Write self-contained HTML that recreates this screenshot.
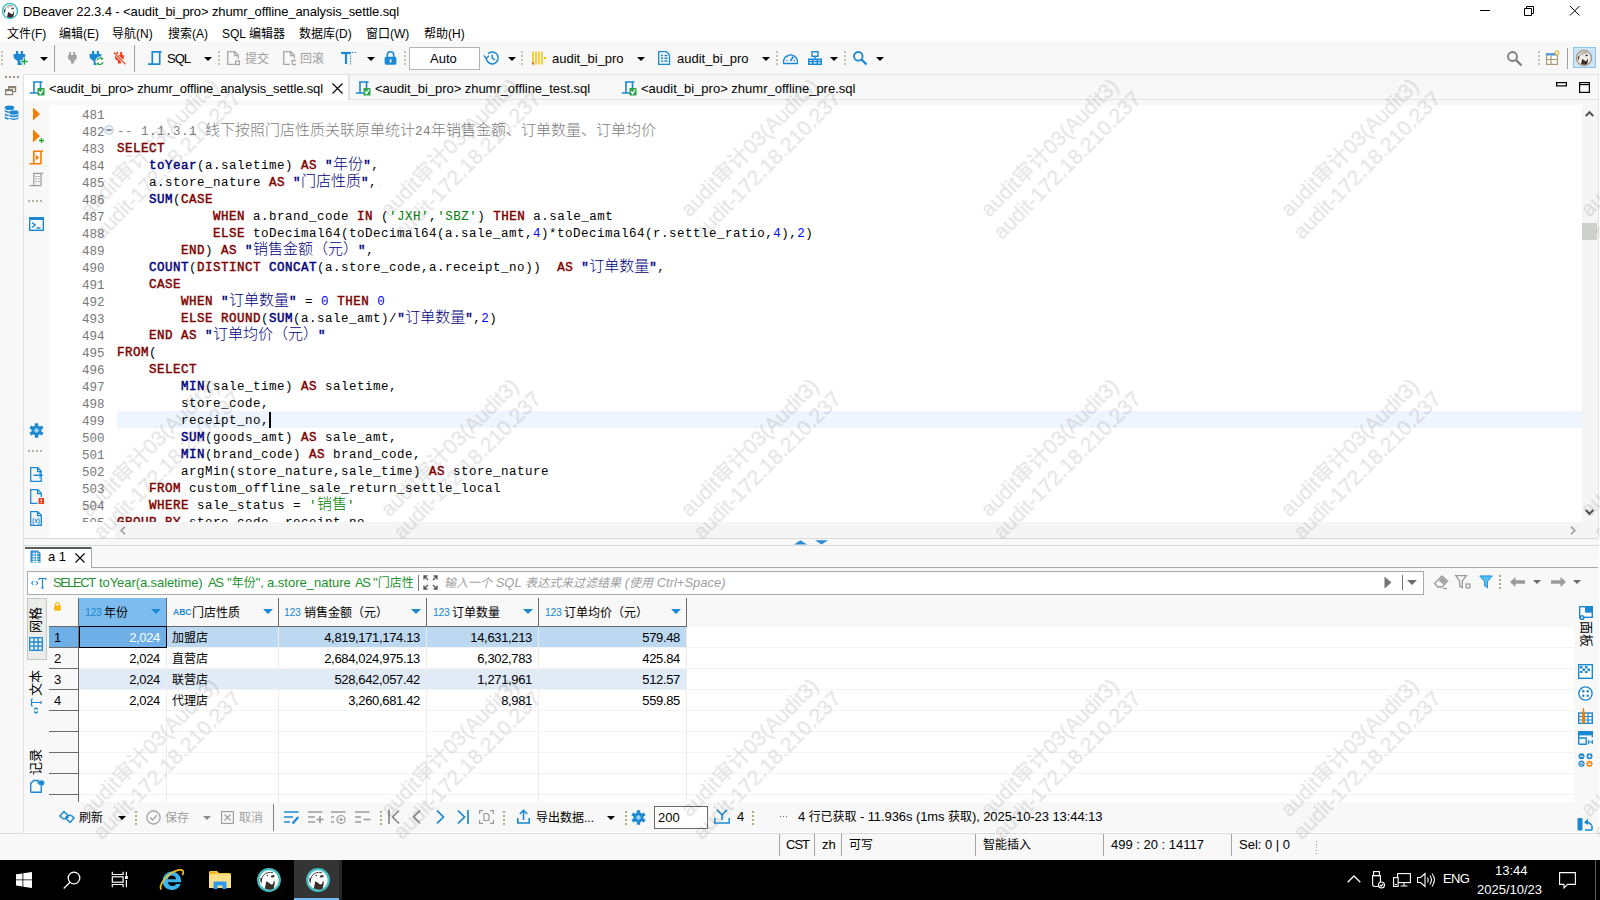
<!DOCTYPE html>
<html lang="zh">
<head>
<meta charset="utf-8">
<title>DBeaver 22.3.4 - &lt;audit_bi_pro&gt; zhumr_offline_analysis_settle.sql</title>
<style>
html,body{margin:0;padding:0;}
body{width:1600px;height:900px;overflow:hidden;background:#fff;position:relative;
  font-family:"Liberation Sans","Noto Sans CJK SC",sans-serif;font-size:12px;color:#000;line-height:1;}
.a{position:absolute;white-space:nowrap;}
.t{position:absolute;white-space:nowrap;line-height:16px;height:16px;font-size:13px;}
.m{font-size:12px;}
.k{font-size:12px;}
svg{position:absolute;overflow:visible;}
/* ---------- chrome ---------- */
#titlebar{left:0;top:0;width:1600px;height:22px;background:#fff;}
#menubar{left:0;top:22px;width:1600px;height:19px;background:#fff;}
#toolbar{left:0;top:41px;width:1600px;height:33px;background:#f8f8f8;}
#leftbar{left:0;top:74px;width:23px;height:786px;background:#f8f8f8;}
#tabbar{left:24px;top:74px;width:1575px;height:26px;background:#f8f8f8;border-top:1px solid #e2e2e2;box-sizing:border-box;}
#tabline{left:24px;top:99px;width:1575px;height:1px;background:#e2e2e2;}
#edwrap{left:24px;top:100px;width:1575px;height:440px;background:#f8f8f8;}
#editor{left:49px;top:105px;width:1533px;height:417px;background:#fff;overflow:hidden;}
#taskbar{left:0;top:860px;width:1600px;height:40px;background:#000;}
.grip{width:2px;height:14px;background:repeating-linear-gradient(180deg,#c9bfb0 0 2px,transparent 2px 4px);}
.dd{width:0;height:0;border-left:4px solid transparent;border-right:4px solid transparent;border-top:4px solid #000;}
.vsep{width:1px;height:27px;background:#a0a0a0;}
.dis{color:#a0a0a0;}
#ttl{letter-spacing:-0.105px;}
#tab1{letter-spacing:-0.145px;}
#tab2{letter-spacing:-0.04px;}
#sqlt{letter-spacing:-1px;}
.hdots{width:15px;height:2px;background:repeating-linear-gradient(90deg,#b8b0a0 0 2px,transparent 2px 4px);}
.vt{font-size:13px;line-height:14px;height:14px;width:26px;text-align:center;transform-origin:0 0;transform:rotate(-90deg);}
.ty{font-size:10.5px;color:#1b88d3;letter-spacing:-0.3px;}
.abc{font-size:8.5px;font-weight:bold;letter-spacing:0;}
.num{text-align:right;letter-spacing:-0.34px;}
.fg{color:#23912f;}
#rt{word-spacing:0;}
.grip2{width:2px;height:14px;background:repeating-linear-gradient(180deg,#b0ac80 0 2px,transparent 2px 4px);}
.vtr{font-size:13px;line-height:14px;height:14px;width:26px;text-align:center;transform-origin:0 0;transform:rotate(90deg);}
.w{color:#fff;}
#wm{left:0;top:0;width:1600px;height:860px;overflow:hidden;pointer-events:none;}
.wmk{position:absolute;width:300px;height:50px;line-height:25px;font-size:21px;text-align:center;color:#000;-webkit-text-stroke:0.45px #000;opacity:0.09;transform:rotate(-45deg);white-space:nowrap;}
#cst{letter-spacing:-1px;}
#stm{letter-spacing:-0.08px;}
#eng{letter-spacing:-0.6px;}
/* ---------- code ---------- */
.ln{position:absolute;left:0;width:1533px;height:17px;line-height:17px;white-space:pre;
  font-family:"Liberation Mono","Noto Sans CJK SC",monospace;font-size:12.5px;letter-spacing:0.5px;color:#000;}
.ln i{position:absolute;left:33px;top:3px;font-style:normal;color:#787878;letter-spacing:0;}
.ln b{font-weight:normal;color:#800000;-webkit-text-stroke:0.45px #800000;}
.ln u{text-decoration:none;font-weight:normal;color:#000080;-webkit-text-stroke:0.45px #000080;}
.ln s{text-decoration:none;color:#000080;}
.ln em{font-style:normal;color:#0000ff;}
.ln q{quotes:none;color:#008000;}
.ln code{position:absolute;left:68px;top:2px;font:inherit;}
.ln .c{color:#808080;}
.z{font-family:"Noto Sans CJK SC",sans-serif;font-size:15px;line-height:0;font-weight:300;position:relative;top:0;letter-spacing:0;}
.ln.cur{background:linear-gradient(#eef5fe,#eef5fe) 68px 0/1465px 17px no-repeat;}
#caret{left:220px;top:307px;width:2px;height:16px;background:#000;}
</style>
</head>
<body>
<div class="a" id="titlebar"></div>
<div class="a" id="menubar"></div>
<!-- title bar -->
<svg style="left:1px;top:2px" width="18" height="18" viewBox="0 0 26 26"><circle cx="13" cy="13" r="10.800" fill="#fff" stroke="#45bfc4" stroke-width="2.200"/><path d="M10.300 14.300l2.700 1.500 2 1.800 2.100-.6.900-3.700.9 2.700-1.300 5.700c-2.500 1.300-6 1.300-8.800-.2z" fill="#3a2e2a"/><ellipse cx="16.700" cy="9.300" rx="2" ry="1.200" transform="rotate(-14 16.700 9.300)" fill="#3a2e2a"/><circle cx="11.300" cy="8.500" r=".7" fill="#3a2e2a"/><path d="M5.500 12.500C6.200 8.800 8.800 6.200 12 5.600c2-.5 3.800-.2 5 .3" fill="none" stroke="#3a2e2a" stroke-width=".9"/><path d="M4.300 11.500c.8-1 1.900-.7 1.800.5L5.600 16.500c-1-1.200-1.600-3.200-1.300-5z" fill="#3a2e2a"/></svg>
<div class="t" id="ttl" style="left:23px;top:4px">DBeaver 22.3.4 - &lt;audit_bi_pro&gt; zhumr_offline_analysis_settle.sql</div>
<svg style="left:1480px;top:5px" width="110" height="12" viewBox="0 0 110 12" fill="none" stroke="#000" stroke-width="1"><path d="M0 5.500h10"/><path d="M44.500 3.500h7v7h-7zM46.500 3.500v-2h7v7h-2"/><path d="M90 1l9.500 9.500M99.500 1L90 10.500"/></svg>
<!-- menu bar -->
<div class="t m" style="left:7px;top:26px">文件(F)</div>
<div class="t m" style="left:59px;top:26px">编辑(E)</div>
<div class="t m" style="left:112px;top:26px">导航(N)</div>
<div class="t m" style="left:168px;top:26px">搜索(A)</div>
<div class="t m" style="left:222px;top:26px">SQL 编辑器</div>
<div class="t m" style="left:299px;top:26px">数据库(D)</div>
<div class="t m" style="left:366px;top:26px">窗口(W)</div>
<div class="t m" style="left:424px;top:26px">帮助(H)</div>
<div class="a" id="toolbar"></div>
<div class="a" id="leftbar"></div>
<div class="a" id="tabbar"></div>
<div class="a" id="tabline"></div>
<div class="a" id="edwrap"></div>
<div class="a" style="left:23px;top:74px;width:1px;height:759px;background:#e2e2e2"></div>
<div class="a" style="left:1598px;top:74px;width:1px;height:759px;background:#e2e2e2"></div>
<!-- toolbar -->
<div class="a grip" style="left:1px;top:51px"></div>
<svg style="left:13px;top:50px" width="16" height="16" viewBox="0 0 16 16"><path d="M3 1h2.200v3h2.600V1H10v3h2.200v2.600c0 2-1.400 3.500-3.400 4.400v4H4.600v-4C2.400 10.100 .6 8.600 .6 6.600V4H3z" fill="#1b88d3"/><path d="M11.400 7.500v8M7.400 11.500h8" stroke="#f8f8f8" stroke-width="3.200" fill="none"/><path d="M11.400 8.300v6.400M8.200 11.500h6.400" stroke="#13a538" stroke-width="1.400" fill="none"/></svg>
<div class="a dd" style="left:40px;top:57px"></div>
<div class="a vsep" style="left:54px;top:45px"></div>
<svg style="left:65px;top:50px" width="16" height="16" viewBox="0 0 16 16"><path d="M4.200 2h1.900v3h2.100V2h1.900v3h1.700v2.300c0 1.700-1.100 2.900-2.800 3.700v2.600H6V11c-1.700-.8-3-2-3-3.700V5h1.200z" fill="#a2a2a2"/></svg>
<svg style="left:89px;top:50px" width="16" height="16" viewBox="0 0 16 16"><path d="M3 1h2.200v3h2.600V1H10v3h2.200v2.600c0 2-1.400 3.500-3.400 4.400v4H4.600v-4C2.400 10.100 .6 8.600 .6 6.600V4H3z" fill="#1b88d3"/><circle cx="11" cy="11.200" r="4.600" fill="#f8f8f8"/><path d="M8 10.300a3.200 3.200 0 0 1 5.500-1.300M14 12.100a3.200 3.200 0 0 1-5.500 1.300" fill="none" stroke="#13a538" stroke-width="1.200"/><path d="M12.300 7.300l2.400 1.500-2.400 1.300zM9.700 15.100l-2.400-1.500 2.400-1.300z" fill="#13a538"/></svg>
<svg style="left:112px;top:50px" width="16" height="16" viewBox="0 0 16 16"><path d="M4.200 2h1.900v3h2.100V2h1.900v3h1.700v2.300c0 1.700-1.100 2.900-2.800 3.700v2.600H6V11c-1.700-.8-3-2-3-3.700V5h1.200z" fill="#f53a14"/><path d="M2 2.500l11.500 11.800" stroke="#f8f8f8" stroke-width="2.800"/><path d="M2 2.500l11.500 11.800" stroke="#f53a14" stroke-width="1.100"/></svg>
<div class="a vsep" style="left:134px;top:45px"></div>
<svg style="left:147px;top:50px" width="16" height="16" viewBox="0 0 16 16" fill="none" stroke="#1b88d3" stroke-width="1.700"><path d="M4.500 1.900h10M5.300 1.900V14.100M12.700 1.900V14.100M1 14.100h12.500"/></svg>
<div class="t" id="sqlt" style="left:167px;top:51px">SQL</div>
<div class="a dd" style="left:204px;top:57px"></div>
<div class="a grip" style="left:218px;top:51px"></div>
<svg style="left:225px;top:50px" width="16" height="16" viewBox="0 0 16 16" fill="none" stroke="#a8a8a8" stroke-width="1.300"><path d="M10 14.300H2.700V1.700h7l3.600 3.600V9M9.500 1.700v4h3.800"/><rect x="10.700" y="11" width="3.600" height="3.600"/></svg>
<div class="t dis k" style="left:245px;top:51px">提交</div>
<svg style="left:281px;top:50px" width="16" height="16" viewBox="0 0 16 16" fill="none" stroke="#a8a8a8" stroke-width="1.300"><path d="M9 14.300H2.700V1.700h7l3.600 3.600V8.500M9.500 1.700v4h3.800M15 10.500h-4v3M11 14.500h4"/></svg>
<div class="t dis k" style="left:300px;top:51px">回滚</div>
<svg style="left:340px;top:50px" width="16" height="16" viewBox="0 0 16 16" fill="none" stroke="#1b88d3"><path d="M1 3h10" stroke-width="2.200"/><path d="M6 3v11" stroke-width="2.200"/><path d="M12 2.500h4M10.500 5.500v9" stroke-width="1.200" stroke-dasharray="1.300 1.300"/></svg>
<div class="a dd" style="left:367px;top:57px"></div>
<svg style="left:383px;top:50px" width="16" height="16" viewBox="0 0 16 16"><path d="M4.300 7.500V5a3.200 3.200 0 0 1 6.400 0v2.500" fill="none" stroke="#1b88d3" stroke-width="1.600"/><rect x="1.600" y="6.800" width="11.800" height="7.900" rx="1.600" fill="#1b88d3"/><rect x="6.700" y="9.300" width="1.700" height="3" fill="#fff"/></svg>
<div class="a grip" style="left:404px;top:51px"></div>
<div class="a" style="left:409px;top:47px;width:69px;height:21px;background:#fff;border:1px solid #b4b4b4;"></div>
<div class="t" id="autot" style="left:430px;top:51px">Auto</div>
<svg style="left:483px;top:50px" width="17" height="16" viewBox="0 0 17 16" fill="none" stroke="#1b88d3" stroke-width="1.500"><path d="M3.200 8a6 6 0 1 0 1.800-4.400"/><path d="M1 5.500l2.300 3 2.700-2.700" stroke-width="1.300"/><path d="M9.300 4.500V8.300l2.600 1.600" stroke-width="1.400"/></svg>
<div class="a dd" style="left:508px;top:57px"></div>
<div class="a grip" style="left:521px;top:51px"></div>
<svg style="left:531px;top:50px" width="16" height="16" viewBox="0 0 16 16"><path d="M2 1.500v13M5 1.500v13M8 1.500v13M11 1.500v13" stroke="#f7c100" stroke-width="1.500"/><rect x="1.300" y="12.500" width="1.600" height="2" fill="#f03a17"/><rect x="13" y="7" width="2" height="2" fill="#f7c100"/></svg>
<div class="t" id="db1" style="left:552px;top:51px">audit_bi_pro</div>
<div class="a dd" style="left:637px;top:57px"></div>
<svg style="left:656px;top:50px" width="16" height="16" viewBox="0 0 16 16" fill="none" stroke="#1b88d3" stroke-width="1.300"><path d="M2.700 1.700h7.800l3 3v9.600H2.700z"/><path d="M5 5.500h2M8.500 5.500h3M5 8.200h2M8.500 8.200h3M5 11h2M8.500 11h3" stroke-width="1.400"/></svg>
<div class="t" id="db2" style="left:677px;top:51px">audit_bi_pro</div>
<div class="a dd" style="left:762px;top:57px"></div>
<div class="a grip" style="left:776px;top:51px"></div>
<svg style="left:782px;top:50px" width="17" height="16" viewBox="0 0 17 16" fill="none" stroke="#1b88d3" stroke-width="1.400"><path d="M1.700 13.500A7 7 0 1 1 15.300 13.500z"/><path d="M8.500 11l2.800-4.500" stroke-width="1.600"/><path d="M4 10.500h1.500M11.500 10.500H13M5 6l1 1M8.500 4v1.500" stroke-width="1.200"/></svg>
<svg style="left:807px;top:50px" width="16" height="16" viewBox="0 0 16 16" fill="none" stroke="#1b88d3" stroke-width="1.400"><rect x="5" y="1.700" width="6" height="4.600"/><path d="M8 6.300v3M1.700 14.300V9.300h12.600v5zM1.700 11.500h12.600M5.700 9.300v5M10.300 9.300v5"/></svg>
<div class="a dd" style="left:830px;top:57px"></div>
<div class="a grip" style="left:844px;top:51px"></div>
<svg style="left:852px;top:50px" width="16" height="16" viewBox="0 0 16 16" fill="none" stroke="#1b88d3"><circle cx="6.300" cy="6.300" r="4.300" stroke-width="1.800"/><path d="M9.500 9.500l5 5" stroke-width="2.400"/></svg>
<div class="a dd" style="left:876px;top:57px"></div>
<!-- toolbar right -->
<svg style="left:1506px;top:50px" width="17" height="17" viewBox="0 0 17 17" fill="none" stroke="#7d7d7d"><circle cx="6.500" cy="6.500" r="4.500" stroke-width="1.800"/><path d="M10 10l5.500 5.500" stroke-width="2.400"/></svg>
<div class="a grip" style="left:1538px;top:51px"></div>
<svg style="left:1545px;top:50px" width="16" height="16" viewBox="0 0 16 16" fill="none"><rect x="1.600" y="3.600" width="10.800" height="10.800" stroke="#a89a70" stroke-width="1.200" fill="#fff"/><rect x="1" y="3" width="12" height="2.600" fill="#5a9be0"/><path d="M1.600 9.500h10.800M6 5.600v8.800" stroke="#a89a70" stroke-width="1.200"/><path d="M12 .3l2.200 2.700L12 5.700 9.800 3z" fill="#fff8d0" stroke="#d8a800" stroke-width="1"/></svg>
<div class="a" style="left:1567px;top:48px;width:1px;height:21px;background:#a0a0a0"></div>
<div class="a" style="left:1573px;top:47px;width:21px;height:19px;background:#cce4f7;border:1px solid #8cc4ee;"></div>
<svg style="left:1575px;top:49px" width="18" height="18" viewBox="0 0 26 26"><circle cx="13" cy="13" r="10.800" fill="#f4efe9" stroke="#a89a8a" stroke-width="2.200"/><path d="M10.300 14.300l2.700 1.500 2 1.800 2.100-.6.900-3.700.9 2.700-1.300 5.700c-2.500 1.300-6 1.300-8.800-.2z" fill="#3a2e2a"/><ellipse cx="16.700" cy="9.300" rx="2" ry="1.200" transform="rotate(-14 16.700 9.300)" fill="#3a2e2a"/><circle cx="11.300" cy="8.500" r=".7" fill="#3a2e2a"/><path d="M5.500 12.500C6.200 8.800 8.800 6.200 12 5.600c2-.5 3.800-.2 5 .3" fill="none" stroke="#3a2e2a" stroke-width=".9"/><path d="M4.300 11.500c.8-1 1.900-.7 1.800.5L5.600 16.500c-1-1.200-1.600-3.200-1.300-5z" fill="#3a2e2a"/></svg>
<!-- editor tabs -->
<div class="a" style="left:23px;top:74px;width:326px;height:26px;background:#fff;border:1px solid #e0e0e0;border-bottom:0;box-sizing:border-box"></div>
<div class="a" style="left:5px;top:76px;width:16px;height:2px;background:repeating-linear-gradient(90deg,#9a9088 0 2px,transparent 2px 4px)"></div>
<svg style="left:5px;top:86px" width="12" height="10" viewBox="0 0 12 10" fill="none" stroke="#8a8072" stroke-width="1.200"><rect x="3.600" y=".6" width="7" height="5"/><rect x=".6" y="3.600" width="7" height="5" fill="#f8f8f8"/><path d="M.6 4.600h7M3.600 1.600h7"/></svg>
<svg class="sqli" style="left:29px;top:80px" width="16" height="16" viewBox="0 0 16 16"><path d="M4 2h9.500M5 2v11M11.500 2v6M.8 13h9" fill="none" stroke="#1b88d3" stroke-width="1.600"/><rect x="8.500" y="8" width="7" height="7.500" fill="#2aa54a"/><path d="M10 11.500l1.700 2 2.300-4" fill="none" stroke="#fff" stroke-width="1.400"/></svg>
<div class="t" id="tab1" style="left:49px;top:81px">&lt;audit_bi_pro&gt; zhumr_offline_analysis_settle.sql</div>
<svg style="left:332px;top:83px" width="11" height="11" viewBox="0 0 11 11" stroke="#000" stroke-width="1.100"><path d="M.5.500l10 10M10.500.500l-10 10"/></svg>
<div class="a" style="left:349px;top:75px;width:1px;height:24px;background:#e0e0e0"></div>
<svg class="sqli" style="left:355px;top:80px" width="16" height="16" viewBox="0 0 16 16"><path d="M4 2h9.500M5 2v11M11.500 2v6M.8 13h9" fill="none" stroke="#1b88d3" stroke-width="1.600"/><rect x="8.500" y="8" width="7" height="7.500" fill="#2aa54a"/><path d="M10 11.500l1.700 2 2.300-4" fill="none" stroke="#fff" stroke-width="1.400"/></svg>
<div class="t" id="tab2" style="left:375px;top:81px">&lt;audit_bi_pro&gt; zhumr_offline_test.sql</div>
<svg class="sqli" style="left:621px;top:80px" width="16" height="16" viewBox="0 0 16 16"><path d="M4 2h9.500M5 2v11M11.500 2v6M.8 13h9" fill="none" stroke="#1b88d3" stroke-width="1.600"/><rect x="8.500" y="8" width="7" height="7.500" fill="#2aa54a"/><path d="M10 11.500l1.700 2 2.300-4" fill="none" stroke="#fff" stroke-width="1.400"/></svg>
<div class="t" id="tab3" style="left:641px;top:81px">&lt;audit_bi_pro&gt; zhumr_offline_pre.sql</div>
<svg style="left:1555px;top:81px" width="36" height="12" viewBox="0 0 36 12" fill="none" stroke="#000" stroke-width="1.200"><rect x="1.600" y="1.600" width="9.800" height="3.300"/><rect x="24.600" y="1.600" width="9.800" height="9.800"/><path d="M24.600 3.600h9.800"/></svg>

<div class="a" id="editor">
<div class="ln" style="top:0px"><i>481</i><code></code></div>
<div class="ln" style="top:17px"><i>482</i><code><span class="c">-- 1.1.3.1 <span class="z">线下按照门店性质关联原单统计</span>24<span class="z">年销售金额、订单数量、订单均价</span></span></code></div>
<div class="ln" style="top:34px"><i>483</i><code><b>SELECT</b></code></div>
<div class="ln" style="top:51px"><i>484</i><code>    <u>toYear</u>(a.saletime) <b>AS</b> <s><u>"</u><span class="z">年份</span><u>"</u></s>,</code></div>
<div class="ln" style="top:68px"><i>485</i><code>    a.store_nature <b>AS</b> <s><u>"</u><span class="z">门店性质</span><u>"</u></s>,</code></div>
<div class="ln" style="top:85px"><i>486</i><code>    <u>SUM</u>(<b>CASE</b></code></div>
<div class="ln" style="top:102px"><i>487</i><code>            <b>WHEN</b> a.brand_code <b>IN</b> (<q>'JXH'</q>,<q>'SBZ'</q>) <b>THEN</b> a.sale_amt</code></div>
<div class="ln" style="top:119px"><i>488</i><code>            <b>ELSE</b> toDecimal64(toDecimal64(a.sale_amt,<em>4</em>)*toDecimal64(r.settle_ratio,<em>4</em>),<em>2</em>)</code></div>
<div class="ln" style="top:136px"><i>489</i><code>        <b>END</b>) <b>AS</b> <s><u>"</u><span class="z">销售金额（元）</span><u>"</u></s>,</code></div>
<div class="ln" style="top:153px"><i>490</i><code>    <u>COUNT</u>(<b>DISTINCT</b> <u>CONCAT</u>(a.store_code,a.receipt_no))  <b>AS</b> <s><u>"</u><span class="z">订单数量</span><u>"</u></s>,</code></div>
<div class="ln" style="top:170px"><i>491</i><code>    <b>CASE</b></code></div>
<div class="ln" style="top:187px"><i>492</i><code>        <b>WHEN</b> <s><u>"</u><span class="z">订单数量</span><u>"</u></s> = <em>0</em> <b>THEN</b> <em>0</em></code></div>
<div class="ln" style="top:204px"><i>493</i><code>        <b>ELSE</b> <b>ROUND</b>(<u>SUM</u>(a.sale_amt)/<s><u>"</u><span class="z">订单数量</span><u>"</u></s>,<em>2</em>)</code></div>
<div class="ln" style="top:221px"><i>494</i><code>    <b>END</b> <b>AS</b> <s><u>"</u><span class="z">订单均价（元）</span><u>"</u></s></code></div>
<div class="ln" style="top:238px"><i>495</i><code><b>FROM</b>(</code></div>
<div class="ln" style="top:255px"><i>496</i><code>    <b>SELECT</b></code></div>
<div class="ln" style="top:272px"><i>497</i><code>        <u>MIN</u>(sale_time) <b>AS</b> saletime,</code></div>
<div class="ln" style="top:289px"><i>498</i><code>        store_code,</code></div>
<div class="ln cur" style="top:306px"><i>499</i><code>        receipt_no,</code></div>
<div class="ln" style="top:323px"><i>500</i><code>        <u>SUM</u>(goods_amt) <b>AS</b> sale_amt,</code></div>
<div class="ln" style="top:340px"><i>501</i><code>        <u>MIN</u>(brand_code) <b>AS</b> brand_code,</code></div>
<div class="ln" style="top:357px"><i>502</i><code>        argMin(store_nature,sale_time) <b>AS</b> store_nature</code></div>
<div class="ln" style="top:374px"><i>503</i><code>    <b>FROM</b> custom_offline_sale_return_settle_local</code></div>
<div class="ln" style="top:391px"><i>504</i><code>    <b>WHERE</b> sale_status = <q>'<span class="z">销售</span>'</q></code></div>
<div class="ln" style="top:408px"><i>505</i><code><b>GROUP BY</b> store_code, receipt_no</code></div>
<div class="a" id="caret"></div>
<svg style="left:55px;top:20px" width="10" height="10" viewBox="0 0 10 10"><circle cx="5" cy="5" r="4.300" fill="#eef2f6" stroke="#b4c4d4" stroke-width="1"/><path d="M2.500 5h5" stroke="#3c5068" stroke-width="1.200"/></svg>
</div>
<!--EDITOR-->
<!-- left bars icons -->
<svg style="left:4px;top:105px" width="15" height="15" viewBox="0 0 15 15" fill="#1b88d3"><ellipse cx="5.500" cy="2.800" rx="4.800" ry="2.300"/><path d="M.7 4.500c1 1.600 3 1.900 4.800 1.900v1.500C3.500 7.900 1.500 7.400.7 6.200zM.7 8c1 1.300 2.500 1.700 4 1.800v1.500c-1.800-.1-3.200-.6-4-1.600zM.7 11.300c1 1.200 2.500 1.600 4 1.700v1.400c-1.800 0-3.300-.5-4-1.500z"/><ellipse cx="10" cy="7.500" rx="4.600" ry="2.200"/><path d="M5.400 9.300c1.500 1.700 7.700 1.700 9.200 0v1.600c-1.500 1.700-7.700 1.700-9.200 0zM5.400 12.300c1.500 1.700 7.700 1.700 9.200 0v1.300c-1.500 1.700-7.700 1.700-9.200 0z"/></svg>
<svg style="left:33px;top:107px" width="8" height="14" viewBox="0 0 8 14"><path d="M0 .5L7 7 0 13.500z" fill="#f57c00"/></svg>
<svg style="left:33px;top:129px" width="12" height="15" viewBox="0 0 12 15"><path d="M0 .5L7 7 0 13.500z" fill="#f57c00"/><path d="M8.500 9v5M6 11.500h5" stroke="#2aa02a" stroke-width="1.300"/></svg>
<svg style="left:29px;top:150px" width="15" height="15" viewBox="0 0 15 15" fill="none" stroke="#f57c00" stroke-width="1.600"><path d="M4 1.300h10M4.800 1.300V13M12 1.300V13.700M.5 13.700H12"/><path d="M6.800 4.500l3.200 3-3.200 3z" fill="#f57c00" stroke="none"/></svg>
<svg style="left:29px;top:172px" width="15" height="15" viewBox="0 0 15 15" fill="none" stroke="#9a9a9a" stroke-width="1.200"><path d="M4 1.300h10M4.800 1.300V13M12 1.300V13.700M.5 13.700H12"/><path d="M6.500 4.500h1.500M9 4.500h1.500M6.500 7h1.500M9 7h1.500M6.500 9.500h1.500M9 9.500h1.500"/></svg>
<div class="a hdots" style="left:28px;top:200px"></div>
<svg style="left:29px;top:217px" width="15" height="14" viewBox="0 0 15 14"><rect x=".7" y=".7" width="13.600" height="12.600" fill="#fff" stroke="#1b88d3" stroke-width="1.400"/><rect x=".7" y=".7" width="13.600" height="2.300" fill="#1b88d3"/><path d="M3 5.500l3.200 2.500L3 10.500M7.500 11h4" fill="none" stroke="#1b88d3" stroke-width="1.400"/></svg>
<svg style="left:29px;top:423px" width="15" height="15" viewBox="0 0 15 15"><path d="M7.500 7.500m-5 0a5 5 0 1 0 10 0a5 5 0 1 0-10 0" fill="#1b88d3"/><g stroke="#1b88d3" stroke-width="3.400"><path d="M7.500 .3v14.400M1.300 3.900l12.400 7.200M1.300 11.100l12.400-7.200"/></g><path d="M7.500 4.700l2.800 2.800-2.800 2.800-2.800-2.800z" fill="#9fd4f5"/></svg>
<div class="a hdots" style="left:28px;top:450px"></div>
<svg style="left:30px;top:467px" width="13" height="15" viewBox="0 0 13 15" fill="none" stroke="#1b88d3" stroke-width="1.300"><path d="M11.300 10.500v3.800H.7V.7h7l3.600 3.600V6M7.500 .7v4h3.800"/><path d="M3.500 8.300h8.500M9.500 5.800l2.500 2.500-2.500 2.500" stroke-width="1.400"/></svg>
<svg style="left:30px;top:489px" width="14" height="15" viewBox="0 0 14 15" fill="none" stroke="#1b88d3" stroke-width="1.300"><path d="M7.500 14.300H.7V.7h7l3.600 3.600V8M7.500 .7v4h3.800"/><rect x="8.500" y="9" width="5.500" height="6" fill="#f03a17" stroke="none"/><path d="M11.250 10v2.500M11.250 13.200v1" stroke="#fff" stroke-width="1.200"/></svg>
<svg style="left:30px;top:511px" width="13" height="15" viewBox="0 0 13 15" fill="none" stroke="#1b88d3" stroke-width="1.300"><path d="M.7 .7h7l3.600 3.600v10H.7zM7.500 .7v4h3.800"/><text x="6" y="11.500" font-family="Liberation Sans,sans-serif" font-size="6.500" font-weight="bold" fill="#1b88d3" stroke="none" text-anchor="middle">(x)</text></svg>
<!-- editor scrollbars -->
<div class="a" style="left:1582px;top:105px;width:16px;height:417px;background:#f5f5f5"></div>
<div class="a" style="left:1582px;top:223px;width:15px;height:17px;background:#cdd1cd"></div>
<svg style="left:1585px;top:111px" width="9" height="6" viewBox="0 0 9 6" fill="none" stroke="#555" stroke-width="2"><path d="M.7 5l3.800-3.800L8.300 5"/></svg>
<svg style="left:1585px;top:509px" width="9" height="6" viewBox="0 0 9 6" fill="none" stroke="#555" stroke-width="2"><path d="M.7 1l3.800 3.800L8.300 1"/></svg>
<div class="a" style="left:49px;top:522px;width:66px;height:16px;background:#fff"></div>
<div class="a" style="left:115px;top:522px;width:1483px;height:16px;background:#f5f5f5"></div>
<svg style="left:120px;top:526px" width="6" height="9" viewBox="0 0 6 9" fill="none" stroke="#a6aaa6" stroke-width="1.900"><path d="M5 .7L1.200 4.500 5 8.300"/></svg>
<svg style="left:1570px;top:526px" width="6" height="9" viewBox="0 0 6 9" fill="none" stroke="#a6aaa6" stroke-width="1.900"><path d="M1 .7l3.800 3.800L1 8.300"/></svg>
<div class="a" style="left:24px;top:538px;width:1575px;height:1px;background:#d8dad8"></div>
<div class="a" style="left:24px;top:539px;width:1575px;height:6px;background:#f8f8f8"></div>
<svg style="left:794px;top:540px" width="34" height="5" viewBox="0 0 34 5" fill="#2a8ad4"><path d="M0 4.500L6.500 .3 13 4.500z"/><path d="M21 .3h13l-6.500 4.200z"/></svg>
<div class="a" style="left:24px;top:545px;width:1575px;height:1px;background:#d8dad8"></div>
<!-- results panel -->
<div class="a" style="left:24px;top:546px;width:1575px;height:286px;background:#f8f8f8"></div>
<div class="a" style="left:91px;top:567px;width:1507px;height:1px;background:#a8a8a8"></div>
<div class="a" style="left:25px;top:547px;width:67px;height:21px;background:#fff;border-right:1px solid #a8a8a8;box-sizing:border-box"></div>
<div class="a" style="left:25px;top:547px;width:66px;height:2px;background:#5a5e5a"></div>
<svg style="left:30px;top:550px" width="11" height="13" viewBox="0 0 11 13"><path d="M.5 .5h7.300l2.700 2.700v9.300H.5z" fill="#1b88d3"/><path d="M1.800 3.800h7.400M1.800 6.400h7.400M1.800 9h7.400M1.800 11.500h7.400M3.900 1.500v11M6.600 1.500v11" stroke="#e8f4fc" stroke-width="1"/></svg>
<div class="t" id="rt" style="left:48px;top:549px">a 1</div>
<svg style="left:75px;top:553px" width="10" height="10" viewBox="0 0 10 10" stroke="#000" stroke-width="1.100"><path d="M.5 .5l9 9M9.500 .5l-9 9"/></svg>
<div class="a" style="left:27px;top:571px;width:1397px;height:24px;background:#fff;border:1px solid #a8acb0;box-sizing:border-box"></div>
<svg style="left:31px;top:577px" width="16" height="12" viewBox="0 0 16 12" fill="none" stroke="#1b88d3" stroke-width="1.100"><path d="M2.500 4L.7 6l1.800 2M5 4l1.800 2L5 8"/><path d="M8 1.500h7M11.500 1.500v9.500M10 11h3M8 1.500v1.500M15 1.500v1.500" stroke-width="1.200"/></svg>
<div class="t fg" style="left:53px;top:575px;letter-spacing:-1.5px">SELECT</div><div class="t fg" style="left:99px;top:575px;letter-spacing:-0.08px">toYear(a.saletime)</div><div class="t fg" style="left:208px;top:575px;letter-spacing:-1.4px">AS</div><div class="t fg" style="left:227px;top:575px">"<span class="k">年份</span>",</div><div class="t fg" style="left:267px;top:575px">a.store_nature</div><div class="t fg" style="left:355px;top:575px;letter-spacing:-1.4px">AS</div><div class="t fg" style="left:373px;top:575px">"<span class="k">门店性</span></div>
<div class="a" style="left:418px;top:575px;width:1px;height:16px;background:#7a7a7a"></div>
<svg style="left:423px;top:575px" width="15" height="15" viewBox="0 0 15 15" fill="none" stroke="#555" stroke-width="1.300"><path d="M1 4.500V1h3.500M10.500 1H14v3.500M14 10.500V14h-3.500M4.500 14H1v-3.500M1 1l4 4M14 1l-4 4M14 14l-4-4M1 14l4-4"/></svg>
<div class="t" id="fh" style="left:444px;top:575px;color:#a0a0a0;font-style:italic"><span class="k">输入一个</span> SQL <span class="k">表达式来过滤结果</span> (<span class="k">使用</span> Ctrl+Space)</div>
<svg style="left:1384px;top:576px" width="8" height="13" viewBox="0 0 8 13"><path d="M.5 .5l7 6-7 6z" fill="#757575"/></svg>
<div class="a" style="left:1402px;top:575px;width:1px;height:15px;background:#757575"></div>
<div class="a dd" style="left:1407px;top:580px;border-top-color:#6a6a6a;border-width:5px 5px 0 5px"></div>
<svg style="left:1433px;top:575px" width="16" height="14" viewBox="0 0 16 14" fill="none" stroke="#9a9a9a" stroke-width="1.300"><path d="M9 1l5.500 5-5.500 6H5L1.500 8.500z"/><path d="M9 1.800l4.600 4.200-3.300 3.600-4.600-4.200z" fill="#a6a6a6" stroke="none"/><path d="M10 13.500h4"/></svg>
<svg style="left:1455px;top:575px" width="16" height="14" viewBox="0 0 16 14" fill="none" stroke="#9a9a9a" stroke-width="1.300"><path d="M.7 .7h10.600L7.300 6v6.500L4.700 11V6z"/><rect x="11" y="9" width="3.800" height="3.800"/></svg>
<svg style="left:1479px;top:575px" width="14" height="14" viewBox="0 0 14 14"><path d="M.7 .9h12.600L8.500 6.500v6.300L5.500 10.800V6.500z" fill="#4fc3f7" stroke="#1b88d3" stroke-width=".9"/></svg>
<div class="a grip2" style="left:1499px;top:575px"></div>
<svg style="left:1510px;top:577px" width="15" height="10" viewBox="0 0 15 10" fill="#9a9a9a"><path d="M0 5l5.500-5v3.300H15v3.400H5.500V10z"/></svg>
<div class="a dd" style="left:1533px;top:580px;border-top-color:#6a6a6a"></div>
<svg style="left:1551px;top:577px" width="15" height="10" viewBox="0 0 15 10" fill="#9a9a9a"><path d="M15 5L9.500 0v3.300H0v3.400h9.500V10z"/></svg>
<div class="a dd" style="left:1573px;top:580px;border-top-color:#6a6a6a"></div>
<div class="a" style="left:27px;top:598px;width:20px;height:62px;background:#eaedea;border:1px solid #c4c8c4;box-sizing:border-box"></div>
<div class="a vt" style="left:29px;top:633px;">网格</div>
<svg style="left:29px;top:637px" width="14" height="14" viewBox="0 0 14 14" fill="none" stroke="#1b88d3" stroke-width="1.300"><rect x=".7" y=".7" width="12.600" height="12.600"/><path d="M.7 5h12.600M.7 9.200h12.600M5 .7v12.600M9.200 .7v12.600"/></svg>
<div class="a vt" style="left:29px;top:696px;">文本</div>
<svg style="left:30px;top:698px" width="12" height="16" viewBox="0 0 12 16" fill="none" stroke="#1b88d3" stroke-width="1.200"><path d="M1.500 1v7M1 4.500h10M11 3v3M1.500 1h1.500M1.500 8h1.500"/><path d="M4 11.500l2-1.800 2 1.800M4 13.500l2 1.800 2-1.800"/></svg>
<div class="a vt" style="left:29px;top:775px;">记录</div>
<svg style="left:29px;top:778px" width="16" height="16" viewBox="0 0 16 16" fill="none" stroke="#1b88d3" stroke-width="1.400"><path d="M1.700 14.300V5.500l3-3h4.500v3.200M1.700 14.300h10.600V8"/><circle cx="12.500" cy="5" r="2.800" fill="#1b88d3" stroke="none"/></svg>
<div class="a" style="left:49px;top:598px;width:1525px;height:29px;background:#f8f8f8"></div><div class="a" style="left:49px;top:627px;width:1525px;height:175px;background:#fff"></div>
<div class="a" style="left:79px;top:647px;width:1495px;height:1px;background:#f3f3f3"></div>
<div class="a" style="left:79px;top:668px;width:1495px;height:1px;background:#f3f3f3"></div>
<div class="a" style="left:79px;top:689px;width:1495px;height:1px;background:#f3f3f3"></div>
<div class="a" style="left:79px;top:710px;width:1495px;height:1px;background:#f3f3f3"></div>
<div class="a" style="left:79px;top:731px;width:1495px;height:1px;background:#f3f3f3"></div>
<div class="a" style="left:79px;top:752px;width:1495px;height:1px;background:#f3f3f3"></div>
<div class="a" style="left:79px;top:773px;width:1495px;height:1px;background:#f3f3f3"></div>
<div class="a" style="left:79px;top:794px;width:1495px;height:1px;background:#f3f3f3"></div>
<div class="a" style="left:79px;top:627px;width:607px;height:20px;background:#bcd9f1"></div>
<div class="a" style="left:79px;top:669px;width:607px;height:20px;background:#e0ebf7"></div>
<div class="a" style="left:166px;top:627px;width:1px;height:175px;background:#ececec"></div>
<div class="a" style="left:278px;top:627px;width:1px;height:175px;background:#ececec"></div>
<div class="a" style="left:426px;top:627px;width:1px;height:175px;background:#ececec"></div>
<div class="a" style="left:538px;top:627px;width:1px;height:175px;background:#ececec"></div>
<div class="a" style="left:686px;top:627px;width:1px;height:175px;background:#ececec"></div>
<div class="a" style="left:49px;top:598px;width:638px;height:28px;background:#f8f8f8"></div>
<div class="a" style="left:79px;top:598px;width:87px;height:28px;background:#7dbcee"></div>
<div class="a" style="left:49px;top:626px;width:638px;height:1px;background:#6a6a6a"></div>
<div class="a" style="left:78px;top:598px;width:1px;height:29px;background:#6a6a6a"></div>
<div class="a" style="left:166px;top:598px;width:1px;height:29px;background:#6a6a6a"></div>
<div class="a" style="left:278px;top:598px;width:1px;height:29px;background:#6a6a6a"></div>
<div class="a" style="left:426px;top:598px;width:1px;height:29px;background:#6a6a6a"></div>
<div class="a" style="left:538px;top:598px;width:1px;height:29px;background:#6a6a6a"></div>
<div class="a" style="left:686px;top:598px;width:1px;height:29px;background:#6a6a6a"></div>
<div class="a" style="left:78px;top:627px;width:1px;height:175px;background:#6a6a6a"></div>
<div class="a" style="left:49px;top:627px;width:29px;height:175px;background:#f8f8f8"></div>
<div class="a" style="left:49px;top:627px;width:29px;height:20px;background:#6eafe8"></div>
<div class="a" style="left:49px;top:647px;width:29px;height:1px;background:#6a6a6a"></div>
<div class="a" style="left:49px;top:668px;width:29px;height:1px;background:#6a6a6a"></div>
<div class="a" style="left:49px;top:689px;width:29px;height:1px;background:#6a6a6a"></div>
<div class="a" style="left:49px;top:710px;width:29px;height:1px;background:#6a6a6a"></div>
<div class="a" style="left:49px;top:731px;width:29px;height:1px;background:#6a6a6a"></div>
<div class="a" style="left:49px;top:752px;width:29px;height:1px;background:#6a6a6a"></div>
<div class="a" style="left:49px;top:773px;width:29px;height:1px;background:#6a6a6a"></div>
<div class="a" style="left:49px;top:794px;width:29px;height:1px;background:#6a6a6a"></div>
<svg style="left:54px;top:602px" width="7" height="9" viewBox="0 0 7 9"><path d="M1.500 4V2.500a2 2 0 0 1 4 0V4" fill="none" stroke="#f7b500" stroke-width="1.200"/><rect x=".3" y="3.600" width="6.400" height="5.200" rx=".8" fill="#f7b500"/></svg>
<div class="a" style="left:79px;top:626px;width:88px;height:22px;background:#6eafe8;border:1px solid #000;box-sizing:border-box"></div>
<div class="t ty" style="left:85px;top:604px">123</div>
<div class="t k" id="h0" style="left:104px;top:605px">年份</div>
<div class="a dd" style="left:151px;top:609px;border-top-color:#1b88d3;border-width:5px 5px 0 5px"></div>
<div class="t ty abc" style="left:173px;top:604px">ABC</div>
<div class="t k" id="h1" style="left:192px;top:605px">门店性质</div>
<div class="a dd" style="left:263px;top:609px;border-top-color:#1b88d3;border-width:5px 5px 0 5px"></div>
<div class="t ty" style="left:284px;top:604px">123</div>
<div class="t k" id="h2" style="left:304px;top:605px">销售金额（元）</div>
<div class="a dd" style="left:411px;top:609px;border-top-color:#1b88d3;border-width:5px 5px 0 5px"></div>
<div class="t ty" style="left:433px;top:604px">123</div>
<div class="t k" id="h3" style="left:452px;top:605px">订单数量</div>
<div class="a dd" style="left:523px;top:609px;border-top-color:#1b88d3;border-width:5px 5px 0 5px"></div>
<div class="t ty" style="left:545px;top:604px">123</div>
<div class="t k" id="h4" style="left:564px;top:605px">订单均价（元）</div>
<div class="a dd" style="left:671px;top:609px;border-top-color:#1b88d3;border-width:5px 5px 0 5px"></div>
<div class="t" style="left:54px;top:630px">1</div>
<div class="t num" style="right:1440px;top:630px;color:#fff">2,024</div>
<div class="t k" style="left:172px;top:630px">加盟店</div>
<div class="t num" style="right:1180px;top:630px">4,819,171,174.13</div>
<div class="t num" style="right:1068px;top:630px">14,631,213</div>
<div class="t num" style="right:920px;top:630px">579.48</div>
<div class="t" style="left:54px;top:651px">2</div>
<div class="t num" style="right:1440px;top:651px">2,024</div>
<div class="t k" style="left:172px;top:651px">直营店</div>
<div class="t num" style="right:1180px;top:651px">2,684,024,975.13</div>
<div class="t num" style="right:1068px;top:651px">6,302,783</div>
<div class="t num" style="right:920px;top:651px">425.84</div>
<div class="t" style="left:54px;top:672px">3</div>
<div class="t num" style="right:1440px;top:672px">2,024</div>
<div class="t k" style="left:172px;top:672px">联营店</div>
<div class="t num" style="right:1180px;top:672px">528,642,057.42</div>
<div class="t num" style="right:1068px;top:672px">1,271,961</div>
<div class="t num" style="right:920px;top:672px">512.57</div>
<div class="t" style="left:54px;top:693px">4</div>
<div class="t num" style="right:1440px;top:693px">2,024</div>
<div class="t k" style="left:172px;top:693px">代理店</div>
<div class="t num" style="right:1180px;top:693px">3,260,681.42</div>
<div class="t num" style="right:1068px;top:693px">8,981</div>
<div class="t num" style="right:920px;top:693px">559.85</div>
<!-- grid extend + right strip -->
<svg style="left:1579px;top:606px" width="14" height="15" viewBox="0 0 14 15"><rect x=".7" y=".7" width="12.600" height="10.600" fill="#fff" stroke="#1b88d3" stroke-width="1.400"/><rect x="6" y=".7" width="7.300" height="6" fill="#1b88d3"/><circle cx="3" cy="11.500" r="2.600" fill="#1b88d3"/><circle cx="3" cy="11.500" r="1" fill="#fff"/></svg>
<div class="a vtr" style="left:1593px;top:621px;">面板</div>
<svg style="left:1578px;top:664px" width="15" height="15" viewBox="0 0 15 15"><rect x=".7" y=".7" width="13.600" height="13.600" fill="#fff" stroke="#1b88d3" stroke-width="1.400"/><path d="M2 2h2.500v2.500H2zM7 2h2.500v2.500H7zM4.500 4.500H7V7H4.500zM9.500 4.500H12V7H9.500zM2 7h2.500v2H2zM7 7h2.500v2H7z" fill="#1b88d3"/></svg>
<svg style="left:1578px;top:686px" width="15" height="15" viewBox="0 0 15 15"><circle cx="7.500" cy="7.500" r="6.600" fill="#fff" stroke="#1b88d3" stroke-width="1.400"/><g fill="#1b88d3"><circle cx="5.300" cy="5.300" r="1.200"/><circle cx="9.700" cy="5.300" r="1.200"/><circle cx="5.300" cy="9.700" r="1.200"/><circle cx="9.700" cy="9.700" r="1.200"/></g></svg>
<svg style="left:1578px;top:708px" width="15" height="16" viewBox="0 0 15 16"><rect x=".7" y="5" width="13.600" height="10.300" fill="#fff" stroke="#1b88d3" stroke-width="1.400"/><path d="M.7 8.500h13.600M.7 12h13.600M5 5v10.300M10 5v10.300" stroke="#1b88d3" stroke-width="1.200"/><rect x="4" y="3.500" width="3" height="12" fill="#f57c00"/><path d="M5.500 0v4" stroke="#f57c00" stroke-width="1.200"/></svg>
<svg style="left:1578px;top:731px" width="15" height="14" viewBox="0 0 15 14" fill="none" stroke="#1b88d3" stroke-width="1.400"><path d="M.7 13.300V.7h13.600v5.500"/><rect x=".7" y=".7" width="13.600" height="3" fill="#1b88d3"/><path d="M.7 13.300h7.500V7H.7"/><path d="M10.500 9v4M14.300 9v4M10.500 11h3.800" stroke-width="1.200"/></svg>
<svg style="left:1578px;top:753px" width="15" height="14" viewBox="0 0 15 14"><circle cx="3.500" cy="3.300" r="3" fill="#1b88d3"/><circle cx="11.500" cy="3.300" r="3" fill="#1b88d3"/><circle cx="3.500" cy="10.700" r="2.500" fill="none" stroke="#1b88d3" stroke-width="1.200"/><path d="M2 9.200l3 3M5 9.200l-3 3" stroke="#1b88d3" stroke-width="1"/><circle cx="11.500" cy="10.700" r="3" fill="#f57c00"/><path d="M1.800 3.300h3.400M9.800 3.300h3.400M11.500 1.600v3.400" stroke="#fff" stroke-width="1"/><path d="M9.800 10h3.400M9.800 11.500h3.400" stroke="#fff" stroke-width=".9"/></svg>
<svg style="left:1577px;top:816px" width="16" height="15" viewBox="0 0 16 15"><rect x=".5" y="2" width="5" height="12.500" rx="1" fill="#1b88d3"/><path d="M8 14h7M15 14v-4.500" stroke="#1b88d3" stroke-width="1.600" fill="none"/><path d="M8 6.500c3-.5 5.500.5 6.500 3" stroke="#1b88d3" stroke-width="1.500" fill="none"/><path d="M7 6.500l4-4v6.500z" fill="#1b88d3"/></svg>
<!-- results bottom toolbar -->
<svg style="left:59px;top:809px" width="16" height="16" viewBox="0 0 16 16" fill="none" stroke="#1b88d3" stroke-width="1.500"><path d="M3.500 9.500L1 7l4-4.500L9 6.500"/><path d="M12.500 6.500L15 9l-4 4.500L7 9.500"/><path d="M6.500 8.500c1.500-2 4-2.500 6-2M9.500 7.500c-1.500 2-4 2.500-6 2"/></svg>
<div class="t k" style="left:79px;top:810px">刷新</div>
<div class="a dd" style="left:118px;top:816px"></div>
<div class="a grip2" style="left:135px;top:811px"></div>
<svg style="left:146px;top:810px" width="15" height="15" viewBox="0 0 15 15" fill="none" stroke="#9a9a9a" stroke-width="1.200"><circle cx="7.500" cy="7.500" r="6.600"/><path d="M4.300 7.500l2.500 2.700 4-5"/></svg>
<div class="t k dis" style="left:165px;top:810px">保存</div>
<div class="a dd" style="left:203px;top:816px;border-top-color:#8a8a8a"></div>
<svg style="left:221px;top:811px" width="13" height="13" viewBox="0 0 13 13" fill="none" stroke="#9a9a9a" stroke-width="1.100"><rect x=".6" y=".6" width="11.800" height="11.800"/><path d="M3.500 3.500l6 6M9.500 3.500l-6 6"/></svg>
<div class="t k dis" style="left:239px;top:810px">取消</div>
<div class="a" style="left:273px;top:804px;width:1px;height:27px;background:#808080"></div>
<svg style="left:284px;top:810px" width="16" height="15" viewBox="0 0 16 15" fill="none" stroke="#1b88d3" stroke-width="1.700"><path d="M0 2h14.500M0 7h9M0 12h6"/><path d="M8.500 13.500l5.800-6.500" stroke-width="2.200"/></svg>
<svg style="left:308px;top:810px" width="16" height="15" viewBox="0 0 16 15" fill="none" stroke="#9a9a9a" stroke-width="1.700"><path d="M0 2h14.500M0 7h7M0 12h7M8.500 9.500h7M12 6v7"/></svg>
<svg style="left:331px;top:810px" width="16" height="15" viewBox="0 0 16 15" fill="none" stroke="#9a9a9a" stroke-width="1.500"><path d="M0 2h14.500M0 7h3M0 12h3"/><circle cx="10" cy="9.500" r="4" stroke-width="1.200"/><path d="M8 9.500h4M10 7.500v4" stroke-width="1.100"/></svg>
<svg style="left:355px;top:810px" width="16" height="15" viewBox="0 0 16 15" fill="none" stroke="#9a9a9a" stroke-width="1.700"><path d="M0 2h14.500M0 7h6M0 12h6M8.500 9.500h7"/></svg>
<div class="a grip2" style="left:380px;top:811px"></div>
<svg style="left:388px;top:810px" width="12" height="14" viewBox="0 0 12 14" fill="none" stroke="#8a8a8a" stroke-width="1.700"><path d="M1 0v14M11 .7L4.500 7l6.500 6.300"/></svg>
<svg style="left:412px;top:810px" width="9" height="14" viewBox="0 0 9 14" fill="none" stroke="#8a8a8a" stroke-width="1.700"><path d="M8 .7L1.500 7 8 13.300"/></svg>
<svg style="left:436px;top:810px" width="9" height="14" viewBox="0 0 9 14" fill="none" stroke="#1b88d3" stroke-width="1.700"><path d="M1 .7L7.500 7 1 13.300"/></svg>
<svg style="left:457px;top:810px" width="12" height="14" viewBox="0 0 12 14" fill="none" stroke="#1b88d3" stroke-width="1.700"><path d="M11 0v14M1 .7L7.500 7 1 13.300"/></svg>
<svg style="left:479px;top:810px" width="15" height="14" viewBox="0 0 15 14" fill="none" stroke="#9a9a9a" stroke-width="1.200"><path d="M.6 4V.6H4M11 .6h3.400V4M14.400 10v3.400H11M4 13.400H.6V10"/><path d="M5 3.500h3.500l1.500 1.500v5.500H5z"/></svg>
<div class="a grip2" style="left:503px;top:811px"></div>
<svg style="left:517px;top:809px" width="13" height="15" viewBox="0 0 13 15" fill="none" stroke="#1b88d3" stroke-width="1.600"><path d="M6.500 11V1.500M2.800 5l3.700-3.700L10.200 5M.8 9v5h11.400V9"/></svg>
<div class="t k" id="exp" style="left:536px;top:810px">导出数据...</div>
<div class="a dd" style="left:607px;top:816px"></div>
<div class="a grip2" style="left:625px;top:811px"></div>
<svg style="left:631px;top:810px" width="15" height="15" viewBox="0 0 15 15"><circle cx="7.500" cy="7.500" r="5" fill="#1b88d3"/><g stroke="#1b88d3" stroke-width="3.400"><path d="M7.500 .3v14.400M1.300 3.900l12.400 7.200M1.300 11.100l12.400-7.200"/></g><path d="M7.500 4.700l2.800 2.800-2.800 2.800-2.800-2.800z" fill="#9fd4f5"/></svg>
<div class="a" style="left:654px;top:806px;width:54px;height:23px;background:#fff;border:1px solid #6a6a6a;box-sizing:border-box"></div>
<div class="t" style="left:658px;top:810px">200</div>
<svg style="left:714px;top:809px" width="16" height="15" viewBox="0 0 16 15" fill="none" stroke="#1b88d3" stroke-width="1.500"><path d="M3 .7l5 5.300 5-5.300M8 6v5M.8 9v5h14.400V9"/></svg>
<div class="t" style="left:737px;top:809px">4</div>
<div class="a grip2" style="left:752px;top:811px"></div>
<div class="a" style="left:780px;top:816px;width:7px;height:1px;background:repeating-linear-gradient(90deg,#666 0 1px,transparent 1px 3px)"></div>
<div class="t" id="stm" style="left:798px;top:809px">4 <span class="k">行已获取</span> - 11.936s (1ms <span class="k">获取</span>), 2025-10-23 13:44:13</div>
<!-- status bar -->
<div class="a" style="left:0;top:833px;width:1600px;height:1px;background:#dcdcdc"></div>
<div class="a" style="left:0;top:834px;width:1600px;height:26px;background:#f8f8f8"></div>
<div class="a" style="left:779px;top:834px;width:1px;height:22px;background:#a6a6a6"></div>
<div class="a" style="left:814px;top:834px;width:1px;height:22px;background:#a6a6a6"></div>
<div class="a" style="left:841px;top:834px;width:1px;height:22px;background:#a6a6a6"></div>
<div class="a" style="left:975px;top:834px;width:1px;height:22px;background:#a6a6a6"></div>
<div class="a" style="left:1103px;top:834px;width:1px;height:22px;background:#a6a6a6"></div>
<div class="a" style="left:1231px;top:834px;width:1px;height:22px;background:#a6a6a6"></div>
<div class="t" id="cst" style="left:786px;top:837px">CST</div>
<div class="t" style="left:822px;top:837px">zh</div>
<div class="t k" style="left:849px;top:837px">可写</div>
<div class="t k" style="left:983px;top:837px">智能插入</div>
<div class="t" id="pos" style="left:1111px;top:837px">499 : 20 : 14117</div>
<div class="t" id="sel" style="left:1239px;top:837px">Sel: 0 | 0</div>
<div class="a" style="left:1316px;top:841px;width:1px;height:13px;background:repeating-linear-gradient(180deg,#a0a0a0 0 1px,transparent 1px 3px)"></div>
<div class="a" id="wm">
<div class="wmk" style="left:8px;top:131px">audit审计03(Audit3)<br>audit-172.18.210.237</div>
<div class="wmk" style="left:308px;top:131px">audit审计03(Audit3)<br>audit-172.18.210.237</div>
<div class="wmk" style="left:608px;top:131px">audit审计03(Audit3)<br>audit-172.18.210.237</div>
<div class="wmk" style="left:908px;top:131px">audit审计03(Audit3)<br>audit-172.18.210.237</div>
<div class="wmk" style="left:1208px;top:131px">audit审计03(Audit3)<br>audit-172.18.210.237</div>
<div class="wmk" style="left:1508px;top:131px">audit审计03(Audit3)<br>audit-172.18.210.237</div>
<div class="wmk" style="left:8px;top:431px">audit审计03(Audit3)<br>audit-172.18.210.237</div>
<div class="wmk" style="left:308px;top:431px">audit审计03(Audit3)<br>audit-172.18.210.237</div>
<div class="wmk" style="left:608px;top:431px">audit审计03(Audit3)<br>audit-172.18.210.237</div>
<div class="wmk" style="left:908px;top:431px">audit审计03(Audit3)<br>audit-172.18.210.237</div>
<div class="wmk" style="left:1208px;top:431px">audit审计03(Audit3)<br>audit-172.18.210.237</div>
<div class="wmk" style="left:1508px;top:431px">audit审计03(Audit3)<br>audit-172.18.210.237</div>
<div class="wmk" style="left:8px;top:731px">audit审计03(Audit3)<br>audit-172.18.210.237</div>
<div class="wmk" style="left:308px;top:731px">audit审计03(Audit3)<br>audit-172.18.210.237</div>
<div class="wmk" style="left:608px;top:731px">audit审计03(Audit3)<br>audit-172.18.210.237</div>
<div class="wmk" style="left:908px;top:731px">audit审计03(Audit3)<br>audit-172.18.210.237</div>
<div class="wmk" style="left:1208px;top:731px">audit审计03(Audit3)<br>audit-172.18.210.237</div>
<div class="wmk" style="left:1508px;top:731px">audit审计03(Audit3)<br>audit-172.18.210.237</div>
</div>
<div class="a" id="taskbar"></div>
<svg style="left:16px;top:872px" width="16" height="16" viewBox="0 0 16 16" fill="#fff"><path d="M0 2.300l6.500-.9v6.100H0zM7.300 1.300L16 0v7.500H7.300zM0 8.300h6.500v6.200L0 13.600zM7.300 8.300H16V16l-8.700-1.200z"/></svg>
<svg style="left:63px;top:871px" width="18" height="18" viewBox="0 0 18 18" fill="none" stroke="#fff" stroke-width="1.300"><circle cx="11" cy="7" r="5.800"/><path d="M7 11.200L.7 17.500"/></svg>
<svg style="left:111px;top:871px" width="18" height="17" viewBox="0 0 18 17" fill="none" stroke="#fff" stroke-width="1.200"><path d="M1.300 .8v2.700h10.800V.8M1.300 16.200v-2.700h10.800v2.700"/><rect x="1.300" y="5.800" width="10.800" height="5.400"/><path d="M15.400 .8v4M15.400 9v7.200"/><rect x="14" y="5" width="2.800" height="3" fill="#fff" stroke="none"/></svg>
<svg style="left:158px;top:866px" width="28" height="28" viewBox="0 0 28 28"><path d="M4.500 15.500a9.300 9.300 0 0 1 18.600-1.200v2H9.800c.4 2.300 2.200 3.800 4.500 3.800 1.800 0 3.200-.8 4-2.100h4.300c-1.200 3.600-4.500 6-8.400 6-5.300 0-9.700-3.700-9.700-8.500zm5.300-2.300h8.400c-.4-2.200-2.100-3.700-4.200-3.700s-3.800 1.500-4.200 3.700z" fill="#3ab4f2"/><path d="M3.200 23.500C1 20.500 5 13 12 8 17.500 4 23.500 2.800 25 5c.6 1 .3 2.500-.6 4.200" fill="none" stroke="#f0c020" stroke-width="1.700"/></svg>
<svg style="left:209px;top:870px" width="22" height="20" viewBox="0 0 22 20"><path d="M0 2.500C0 1.700.7 1 1.500 1H8l2 2h10.500c.8 0 1.500.7 1.500 1.500V17H0z" fill="#f5c84a"/><rect x="0" y="4.500" width="22" height="13.500" fill="#fbe08a"/><rect x="1.200" y="2" width="5.500" height="1.200" fill="#f7a800"/><path d="M4.500 19v-6.500c0-.6.400-1 1-1h11c.6 0 1 .4 1 1V19h-4v-3.500h-5V19z" fill="#2d9cf0"/></svg>
<div class="a" style="left:294px;top:860px;width:45px;height:40px;background:#343434"></div>
<div class="a" style="left:339px;top:860px;width:3px;height:40px;background:#262626"></div>
<div class="a" style="left:294px;top:898px;width:45px;height:2px;background:#76b9ed"></div>
<svg style="left:256px;top:867px" width="26" height="26" viewBox="0 0 26 26"><circle cx="13" cy="13" r="10.800" fill="#fff" stroke="#45bfc4" stroke-width="2.200"/><path d="M10.300 14.300l2.700 1.500 2 1.800 2.100-.6.900-3.700.9 2.700-1.300 5.700c-2.500 1.300-6 1.300-8.800-.2z" fill="#3a2e2a"/><ellipse cx="16.700" cy="9.300" rx="2" ry="1.200" transform="rotate(-14 16.700 9.300)" fill="#3a2e2a"/><circle cx="11.300" cy="8.500" r=".7" fill="#3a2e2a"/><path d="M5.500 12.500C6.200 8.800 8.800 6.200 12 5.600c2-.5 3.800-.2 5 .3" fill="none" stroke="#3a2e2a" stroke-width=".9"/><path d="M4.300 11.500c.8-1 1.900-.7 1.800.5L5.600 16.500c-1-1.200-1.600-3.200-1.300-5z" fill="#3a2e2a"/></svg>
<svg style="left:305px;top:867px" width="26" height="26" viewBox="0 0 26 26"><circle cx="13" cy="13" r="10.800" fill="#fff" stroke="#45bfc4" stroke-width="2.200"/><path d="M10.300 14.300l2.700 1.500 2 1.800 2.100-.6.900-3.700.9 2.700-1.300 5.700c-2.500 1.300-6 1.300-8.800-.2z" fill="#3a2e2a"/><ellipse cx="16.700" cy="9.300" rx="2" ry="1.200" transform="rotate(-14 16.700 9.300)" fill="#3a2e2a"/><circle cx="11.300" cy="8.500" r=".7" fill="#3a2e2a"/><path d="M5.500 12.500C6.200 8.800 8.800 6.200 12 5.600c2-.5 3.800-.2 5 .3" fill="none" stroke="#3a2e2a" stroke-width=".9"/><path d="M4.300 11.500c.8-1 1.900-.7 1.800.5L5.600 16.500c-1-1.200-1.600-3.200-1.300-5z" fill="#3a2e2a"/></svg>
<svg style="left:1347px;top:875px" width="14" height="8" viewBox="0 0 14 8" fill="none" stroke="#fff" stroke-width="1.300"><path d="M.7 7.300L7 1l6.300 6.300"/></svg>
<svg style="left:1371px;top:871px" width="14" height="18" viewBox="0 0 14 18" fill="none" stroke="#fff" stroke-width="1.100"><rect x="2.600" y=".6" width="5.800" height="4"/><path d="M1.600 4.600h7.800V13c0 1.500-1 2.500-2.500 2.500H4c-1.500 0-2.400-1-2.400-2.500z"/><circle cx="10.500" cy="14" r="3" fill="#000"/><path d="M9 14l1.200 1.200 2-2.400"/></svg>
<svg style="left:1393px;top:872px" width="18" height="16" viewBox="0 0 18 16" fill="none" stroke="#fff" stroke-width="1.100"><rect x="4.600" y="1.600" width="12.800" height="9"/><path d="M11 10.600v3M7.500 14h7"/><rect x=".6" y="5.600" width="4.500" height="8.800" fill="#000"/><path d="M1.800 12.500h2"/></svg>
<svg style="left:1417px;top:872px" width="18" height="16" viewBox="0 0 18 16" fill="none" stroke="#fff" stroke-width="1.100"><path d="M.6 5.500h3L8 1.500v13l-4.400-4h-3z"/><path d="M10.500 5.500c1 1.500 1 3.500 0 5M12.800 3.500c2 2.700 2 6.300 0 9M15 1.500c3 4 3 9 0 13"/></svg>
<div class="t w" id="eng" style="left:1443px;top:871px">ENG</div>
<div class="t w" id="tm" style="left:1495px;top:863px">13:44</div>
<div class="t w" id="dt" style="left:1477px;top:882px">2025/10/23</div>
<svg style="left:1559px;top:872px" width="17" height="17" viewBox="0 0 17 17" fill="none" stroke="#fff" stroke-width="1.100"><path d="M.6 .6h15.800v11.800H8.500l-3.500 3.500v-3.500H.6z"/></svg>
<div class="a" style="left:1595px;top:860px;width:1px;height:40px;background:#5a5a5a"></div>
</body>
</html>
